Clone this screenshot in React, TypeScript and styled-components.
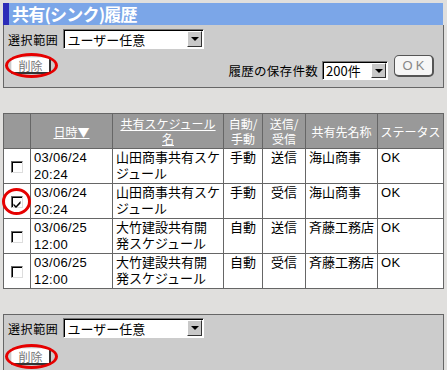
import React from "react";
import styled, { createGlobalStyle } from "styled-components";

const Global = createGlobalStyle`
  html, body { margin: 0; padding: 0; background: #e0dfdd; }
  body { font-family: "Liberation Sans", "Noto Sans CJK JP", sans-serif; font-size: 13px; color: #000; }
`;

const Page = styled.div`
  width: 440px;
  margin: 3px 0 0 3px;
`;

const TitleBar = styled.div`
  height: 22px;
  box-sizing: border-box;
  background: #7ba6e8;
  border-left: 6px solid #2c2cb8;
  padding-left: 3px;
  color: #fff;
  font-family: "Noto Sans CJK JP", sans-serif;
  font-weight: bold;
  font-size: 17px;
  line-height: 22px;
  letter-spacing: -0.8px;
  white-space: nowrap;
`;

const Panel = styled.div<{ $top?: boolean }>`
  background: #cccccc;
  border: 1px solid #666;
  border-top: ${(p) => (p.$top ? "none" : "1px solid #666")};
  height: ${(p) => (p.$top ? "58px" : "54px")};
  padding: ${(p) => (p.$top ? "4px" : "3px")} 0 0 4px;
  box-sizing: content-box;
  width: 435px;
`;

const Row = styled.div`
  display: flex;
  align-items: center;
  height: 20px;
`;

const Label = styled.span`
  font-family: "Noto Sans CJK JP", sans-serif;
  font-size: 12px;
  letter-spacing: 0.6px;
  margin-right: 5px;
  white-space: nowrap;
`;

const SelectBox = styled.div<{ $w: number; $h: number }>`
  display: flex;
  align-items: center;
  justify-content: space-between;
  width: ${(p) => p.$w}px;
  height: ${(p) => p.$h}px;
  box-sizing: border-box;
  background: #fff;
  border: 1px solid;
  border-color: #777 #fff #fff #777;
  box-shadow: inset 1px 1px 0 #000;
  padding: 1px 1px 1px 3px;
  font-family: "Noto Sans CJK JP", sans-serif;
  font-size: 13px;
`;

const ArrowBtn = styled.span`
  width: 15px;
  height: 100%;
  box-sizing: border-box;
  background: #c8c8c8;
  border: 1px solid;
  border-color: #fff #333 #333 #fff;
  display: flex;
  align-items: center;
  justify-content: center;
  &::after {
    content: "";
    border-left: 4px solid transparent;
    border-right: 4px solid transparent;
    border-top: 4px solid #000;
  }
`;

const Row2 = styled.div<{ $gap: number }>`
  display: flex;
  justify-content: space-between;
  margin-top: ${(p) => p.$gap}px;
  height: 28px;
`;

const BtnWrap = styled.div<{ $mt: number }>`
  position: relative;
  margin-top: ${(p) => p.$mt}px;
  margin-left: 3px;
  height: 17px;
`;

const DelButton = styled.span`
  display: inline-flex;
  align-items: center;
  justify-content: center;
  width: 40px;
  height: 17px;
  box-sizing: border-box;
  background: #fff;
  border: 1px solid;
  border-width: 1px 2px 2px 1px;
  border-color: #eee #333 #333 #eee;
  color: #777;
  font-family: "Noto Sans CJK JP", sans-serif;
  font-size: 12px;
`;

const RedEllipse = styled.span<{ $x: number; $y: number; $w: number; $h: number }>`
  position: absolute;
  left: ${(p) => p.$x}px;
  top: ${(p) => p.$y}px;
  width: ${(p) => p.$w}px;
  height: ${(p) => p.$h}px;
  box-sizing: border-box;
  border: 3.5px solid #e60000;
  border-radius: 50%;
  pointer-events: none;
`;

const RightGroup = styled.div`
  display: flex;
  align-items: flex-start;
  margin-right: 9px;
`;

const RightLabel = styled.span`
  font-family: "Noto Sans CJK JP", sans-serif;
  font-size: 12.5px;
  letter-spacing: 0.3px;
  margin-top: 11px;
  margin-right: 4px;
  line-height: 14px;
`;

const SelWrap = styled.div`
  margin-top: 8px;
`;

const OkButton = styled.span`
  display: inline-flex;
  align-items: center;
  justify-content: center;
  margin-top: 2px;
  margin-left: 6px;
  width: 40px;
  height: 22px;
  box-sizing: border-box;
  background: #f6f6f6;
  border: 1px solid #555;
  border-right-width: 2px;
  border-bottom-width: 2px;
  border-radius: 5px;
  color: #888;
  font-family: "Liberation Sans", sans-serif;
  font-size: 13px;
  letter-spacing: 3px;
  padding-left: 3px;
`;

const Gap = styled.div`
  height: 25px;
`;

const Table = styled.table`
  width: 440px;
  table-layout: fixed;
  border-collapse: collapse;
  border: 1px solid #666;
  background: #fff;
`;

const Th = styled.th`
  background: #999;
  color: #fff;
  font-family: "Noto Sans CJK JP", sans-serif;
  font-weight: normal;
  font-size: 12px;
  line-height: 15px;
  height: 34px;
  padding: 0 2px;
  border: 1px solid #666;
  text-align: center;
  vertical-align: middle;
`;

const HeadLink = styled.span`
  text-decoration: underline;
`;

const Td = styled.td<{ $center?: boolean }>`
  height: 33px;
  box-sizing: border-box;
  padding: 0 3px;
  border: 1px solid #666;
  vertical-align: top;
  text-align: ${(p) => (p.$center ? "center" : "left")};
  font-family: "Noto Sans CJK JP", sans-serif;
  font-size: 13px;
  line-height: 16px;
  white-space: normal;
  word-break: break-all;
`;

const DateText = styled.span`
  font-family: "Liberation Sans", sans-serif;
  font-size: 13px;
  letter-spacing: 0.3px;
  line-height: 16px;
`;

const CheckCell = styled.td`
  border: 1px solid #666;
  padding: 0;
  text-align: center;
  vertical-align: middle;
`;

const CheckWrap = styled.span`
  position: relative;
  display: inline-block;
  width: 12px;
  height: 12px;
  vertical-align: middle;
`;

const CheckBox = styled.span`
  display: block;
  width: 12px;
  height: 12px;
  box-sizing: border-box;
  background: #fff;
  border: 1px solid;
  border-color: #666 #ddd #ddd #666;
  box-shadow: inset 1px 1px 0 #000;
`;

const rows = [
  { date: "03/06/24", time: "20:24", l1: "山田商事共有スケ", l2: "ジュール", mode: "手動", dir: "送信", to: "海山商事", checked: false },
  { date: "03/06/24", time: "20:24", l1: "山田商事共有スケ", l2: "ジュール", mode: "手動", dir: "受信", to: "海山商事", checked: true },
  { date: "03/06/25", time: "12:00", l1: "大竹建設共有開", l2: "発スケジュール", mode: "自動", dir: "送信", to: "斉藤工務店", checked: false },
  { date: "03/06/25", time: "12:00", l1: "大竹建設共有開", l2: "発スケジュール", mode: "自動", dir: "受信", to: "斉藤工務店", checked: false },
];

const Select = ({ w, h, text }: { w: number; h: number; text: string }) => (
  <SelectBox $w={w} $h={h}>
    <span>{text}</span>
    <ArrowBtn />
  </SelectBox>
);

export default function App() {
  return (
    <>
      <Global />
      <Page>
        <TitleBar>共有(シンク)履歴</TitleBar>
        <Panel $top>
          <Row>
            <Label>選択範囲</Label>
            <Select w={141} h={20} text="ユーザー任意" />
          </Row>
          <Row2 $gap={4}>
            <BtnWrap $mt={4}>
              <DelButton>削除</DelButton>
              <RedEllipse $x={-6} $y={-4} $w={53} $h={25} />
            </BtnWrap>
            <RightGroup>
              <RightLabel>履歴の保存件数</RightLabel>
              <SelWrap>
                <Select w={66} h={19} text="200件" />
              </SelWrap>
              <OkButton>OK</OkButton>
            </RightGroup>
          </Row2>
        </Panel>
        <Gap />
        <Table>
          <colgroup>
            <col style={{ width: 27 }} />
            <col style={{ width: 82 }} />
            <col style={{ width: 111 }} />
            <col style={{ width: 39 }} />
            <col style={{ width: 43 }} />
            <col style={{ width: 72 }} />
            <col style={{ width: 66 }} />
          </colgroup>
          <thead>
            <tr>
              <Th />
              <Th><HeadLink>日時▼</HeadLink></Th>
              <Th><HeadLink>共有スケジュール<br />名</HeadLink></Th>
              <Th>自動/<br />手動</Th>
              <Th>送信/<br />受信</Th>
              <Th>共有先名称</Th>
              <Th>ステータス</Th>
            </tr>
          </thead>
          <tbody>
            {rows.map((r, i) => (
              <tr key={i}>
                <CheckCell>
                  <CheckWrap>
                    <CheckBox>
                      {r.checked && (
                        <svg width="10" height="10" viewBox="0 0 10 10">
                          <path d="M1.5 4.5 L4 7 L8.5 2 L8.5 4.5 L4 9 L1.5 6.5 Z" fill="#000" />
                        </svg>
                      )}
                    </CheckBox>
                    {r.checked && <RedEllipse $x={-9} $y={-8} $w={29} $h={27} />}
                  </CheckWrap>
                </CheckCell>
                <Td>
                  <DateText>{r.date}<br />{r.time}</DateText>
                </Td>
                <Td>{r.l1}<br />{r.l2}</Td>
                <Td $center>{r.mode}</Td>
                <Td $center>{r.dir}</Td>
                <Td>{r.to}</Td>
                <Td><DateText>OK</DateText></Td>
              </tr>
            ))}
          </tbody>
        </Table>
        <Gap />
        <Panel>
          <Row>
            <Label>選択範囲</Label>
            <Select w={141} h={20} text="ユーザー任意" />
          </Row>
          <Row2 $gap={6}>
            <BtnWrap $mt={4}>
              <DelButton>削除</DelButton>
              <RedEllipse $x={-6} $y={-4} $w={53} $h={25} />
            </BtnWrap>
          </Row2>
        </Panel>
      </Page>
    </>
  );
}
